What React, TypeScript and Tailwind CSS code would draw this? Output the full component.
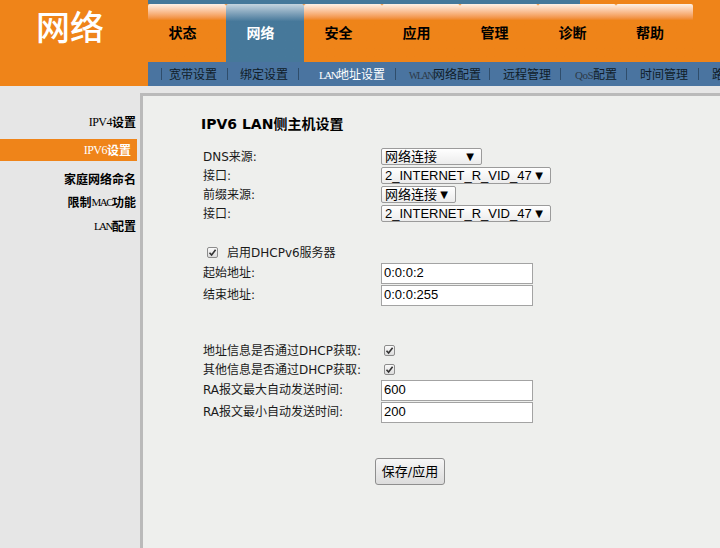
import React from 'react';

const tabs = ['状态', '网络', '安全', '应用', '管理', '诊断', '帮助'];

const Sep = () => <span className="w-px h-[12px] bg-[#2f4d6b] shrink-0" />;

const Lat = ({ children, className = '' }: { children: React.ReactNode; className?: string }) => (
  <span className={`font-['Liberation_Serif','DejaVu_Serif',serif] font-normal ${className}`}>{children}</span>
);

const Check = () => (
  <span className="w-[11px] h-[11px] border border-[#8c8c8c] rounded-[2px] bg-linear-to-b from-[#fafafa] to-[#dcdcdc] flex items-center justify-center shrink-0">
    <svg width="9" height="9" viewBox="0 0 9 9">
      <path d="M1.5 4.8 L3.6 7 L7.6 1.8" fill="none" stroke="#333" strokeWidth="1.6" />
    </svg>
  </span>
);

const Select = ({ text, w }: { text: string; w: string }) => (
  <div className={`${w} h-[17px] border border-[#9b9b9b] rounded-[2px] bg-linear-to-b from-white to-[#ececec] flex items-center justify-between pl-[3px] pr-[7px] font-['Liberation_Sans','Noto_Sans_CJK_SC',sans-serif] text-[13px] text-black leading-none`}>
    <span>{text}</span>
    <span className="text-[10px] font-['DejaVu_Sans',sans-serif]">▼</span>
  </div>
);

const Input = ({ value }: { value: string }) => (
  <div className="w-[152px] h-[21px] border border-[#a3a3a3] bg-white flex items-center pl-[2px] font-['Liberation_Sans',sans-serif] text-[13px] text-black">
    {value}
  </div>
);

const Row = ({ label, h = 'h-[19px]', children }: { label: string; h?: string; children?: React.ReactNode }) => (
  <div className={`flex items-center ${h}`}>
    <div className="w-[178px] shrink-0">{label}</div>
    {children}
  </div>
);

export default function App() {
  return (
    <div className="w-[720px] h-[548px] overflow-hidden bg-[#e6e6e6] flex flex-col font-['DejaVu_Sans','Noto_Sans_CJK_SC',sans-serif] text-[#1a1a1a]">
      {/* header */}
      <header className="flex h-[86px] shrink-0">
        <div className="w-[148px] shrink-0 bg-[#ef8419] pl-[36px] pt-[4px] text-white text-[34px] font-['Noto_Sans_CJK_SC',sans-serif] font-medium leading-[44px]">
          网络
        </div>
        <div className="flex-1 min-w-0 flex flex-col bg-[#ef8419]">
          <div className="h-[4px] flex">
            <div className="w-[432px] bg-[#44789a]" />
          </div>
          <div className="h-[58px] flex">
            {tabs.map((t, i) => (
              <div
                key={t}
                className={`${i === 6 ? 'w-[77px]' : 'w-[78px]'} shrink-0 flex items-center justify-center pr-[9px] pb-[1px] rounded-t-[2px] text-[14px] font-bold font-['Noto_Sans_CJK_SC',sans-serif] ${
                  i === 1
                    ? 'bg-linear-to-b from-[#c4d4df] to-[#46789a] to-30% text-white'
                    : 'bg-linear-to-b from-[#fdf1e6] to-[#ef8419] to-28% text-black'
                }`}
              >
                {t}
              </div>
            ))}
          </div>
          <nav className="h-[24px] bg-[#4a74a0] flex items-center pl-[13px] whitespace-nowrap overflow-hidden text-[12px] text-[#101c28] font-['Noto_Sans_CJK_SC',sans-serif]">
            <Sep /><span className="w-[65px] shrink-0 pl-[7px]">宽带设置</span>
            <Sep /><span className="w-[70px] shrink-0 pl-[12px]">绑定设置</span>
            <Sep /><span className="w-[96px] shrink-0 pl-[20px] text-white"><Lat className="text-[11px] tracking-[-1.5px]">LAN</Lat>地址设置</span>
            <Sep /><span className="w-[93px] shrink-0 pl-[13px]"><Lat className="text-[10px] tracking-[-1.5px] text-[#2d3a48]">WLAN</Lat>网络配置</span>
            <Sep /><span className="w-[70px] shrink-0 pl-[13px]">远程管理</span>
            <Sep /><span className="w-[65px] shrink-0 pl-[14px]"><Lat className="text-[11px] tracking-[-0.5px] text-[#2d3a48]">QoS</Lat>配置</span>
            <Sep /><span className="w-[71px] shrink-0 pl-[13px]">时间管理</span>
            <Sep /><span className="shrink-0 pl-[13px]">路由配置</span>
          </nav>
        </div>
      </header>

      <div className="flex flex-1">
        {/* sidebar */}
        <aside className="w-[140px] shrink-0 flex flex-col text-[12px] font-bold font-['Noto_Sans_CJK_SC',sans-serif] text-black">
          <div className="mt-[25px] w-[137px] h-[22px] flex items-center justify-end pr-[1px]"><Lat className="text-[12px] tracking-[-0.5px]">IPV4</Lat>设置</div>
          <div className="mt-[6px] w-[137px] h-[22px] flex items-center justify-end pr-[6px] bg-[#ef8419] text-white"><Lat className="text-[12px] tracking-[-0.5px]">IPV6</Lat>设置</div>
          <div className="mt-[7px] w-[137px] h-[22px] flex items-center justify-end pr-[1px]">家庭网络命名</div>
          <div className="mt-[1px] w-[137px] h-[22px] flex items-center justify-end pr-[1px]">限制<Lat className="text-[11px] tracking-[-1.5px]">MAC</Lat>功能</div>
          <div className="mt-[2px] w-[137px] h-[22px] flex items-center justify-end pr-[1px]"><Lat className="text-[11px] tracking-[-1.5px]">LAN</Lat>配置</div>
        </aside>

        {/* panel */}
        <main className="flex-1 mt-[7px] border-l-[3px] border-t-[3px] border-[#bababa] bg-[#eeefed] pl-[58px] pt-[20px]">
          <h1 className="text-[14px] font-bold leading-[16px] h-[16px] text-black">IPV6 LAN侧主机设置</h1>
          <div className="ml-[2px] mt-[15px] text-[12px]">
            <Row label="DNS来源:"><Select text="网络连接" w="w-[101px]" /></Row>
            <Row label="接口:"><Select text="2_INTERNET_R_VID_47" w="w-[170px]" /></Row>
            <Row label="前缀来源:"><Select text="网络连接" w="w-[75px]" /></Row>
            <Row label="接口:"><Select text="2_INTERNET_R_VID_47" w="w-[170px]" /></Row>

            <div className="mt-[20px] h-[19px] flex items-center pl-[4px]">
              <Check />
              <span className="ml-[9px]">启用DHCPv6服务器</span>
            </div>
            <Row label="起始地址:" h="h-[22px]"><Input value="0:0:0:2" /></Row>
            <Row label="结束地址:" h="h-[22px]"><Input value="0:0:0:255" /></Row>

            <div className="mt-[35px]">
              <Row label="地址信息是否通过DHCP获取:"><span className="ml-[3px]"><Check /></span></Row>
              <Row label="其他信息是否通过DHCP获取:"><span className="ml-[3px]"><Check /></span></Row>
              <Row label="RA报文最大自动发送时间:" h="h-[22px]"><Input value="600" /></Row>
              <Row label="RA报文最小自动发送时间:" h="h-[22px]"><Input value="200" /></Row>
            </div>

            <button className="mt-[35px] ml-[172px] w-[70px] h-[27px] border border-[#8e8e8e] rounded-[3px] bg-linear-to-b from-[#f6f6f6] to-[#dcdcdc] text-[13px] text-black">
              保存/应用
            </button>
          </div>
        </main>
      </div>
    </div>
  );
}
